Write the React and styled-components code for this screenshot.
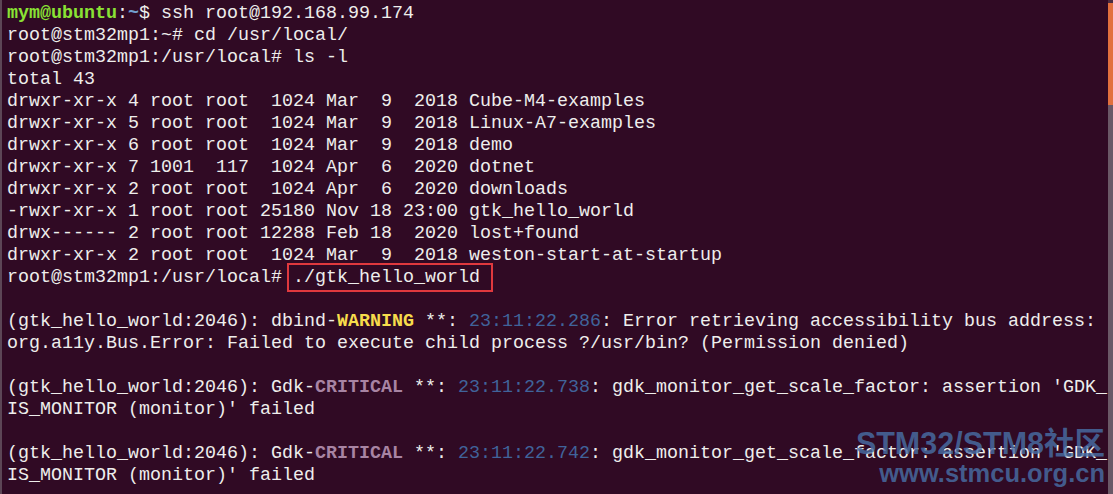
import React from "react";
import styled, { createGlobalStyle } from "styled-components";

const Global = createGlobalStyle`
  html, body {
    margin: 0;
    padding: 0;
    background: #300a24;
  }
`;

const files = [
  "drwxr-xr-x 4 root root  1024 Mar  9  2018 Cube-M4-examples",
  "drwxr-xr-x 5 root root  1024 Mar  9  2018 Linux-A7-examples",
  "drwxr-xr-x 6 root root  1024 Mar  9  2018 demo",
  "drwxr-xr-x 7 1001  117  1024 Apr  6  2020 dotnet",
  "drwxr-xr-x 2 root root  1024 Apr  6  2020 downloads",
  "-rwxr-xr-x 1 root root 25180 Nov 18 23:00 gtk_hello_world",
  "drwx------ 2 root root 12288 Feb 18  2020 lost+found",
  "drwxr-xr-x 2 root root  1024 Mar  9  2018 weston-start-at-startup",
];

const App = () => {
  return (
    <>
      <Global />
      <Screen>
        <Edge />
        <Terminal>
          <Line>
            <Span $c="#8ae234" $bold>mym@ubuntu</Span>:<Span $c="#729fcf" $bold>~</Span>$ ssh root@192.168.99.174
          </Line>
          <Line>root@stm32mp1:~# cd /usr/local/</Line>
          <Line>root@stm32mp1:/usr/local# ls -l</Line>
          <Line>total 43</Line>
          {files.map((f, i) => (
            <Line key={i}>{f}</Line>
          ))}
          <Line>
            root@stm32mp1:/usr/local# <Boxed>./gtk_hello_world</Boxed>
          </Line>
          <Line> </Line>
          <Line>
            (gtk_hello_world:2046): dbind-<Span $c="#f7dc4c" $bold>WARNING</Span> **: <Span $c="#40639a">23:11:22.286</Span>: Error retrieving accessibility bus address:
          </Line>
          <Line>org.a11y.Bus.Error: Failed to execute child process ?/usr/bin? (Permission denied)</Line>
          <Line> </Line>
          <Line>
            (gtk_hello_world:2046): Gdk-<Span $c="#a884a3" $bold>CRITICAL</Span> **: <Span $c="#40639a">23:11:22.738</Span>: gdk_monitor_get_scale_factor: assertion 'GDK_
          </Line>
          <Line>IS_MONITOR (monitor)' failed</Line>
          <Line> </Line>
          <Line>
            (gtk_hello_world:2046): Gdk-<Span $c="#a884a3" $bold>CRITICAL</Span> **: <Span $c="#40639a">23:11:22.742</Span>: gdk_monitor_get_scale_factor: assertion 'GDK_
          </Line>
          <Line>IS_MONITOR (monitor)' failed</Line>
        </Terminal>
        <Scrollbar>
          <Gap />
          <Thumb />
          <Track />
        </Scrollbar>
        <Watermark>
          <Mark $size={30.5}>STM32/STM8社区</Mark>
          <Mark $size={25.5}>www.stmcu.org.cn</Mark>
        </Watermark>
      </Screen>
    </>
  );
};

const Screen = styled.div`
  position: relative;
  display: flex;
  width: 1113px;
  height: 494px;
  overflow: hidden;
  background: #300a24;
`;

const Edge = styled.div`
  width: 2px;
  flex: none;
  background: #5c4656;
`;

const Terminal = styled.div`
  flex: 1;
  padding: 3px 0 0 5px;
  font-family: "Liberation Mono", "Courier New", monospace;
  font-size: 18.33px;
  color: #eeeeec;
`;

const Line = styled.div`
  height: 22px;
  line-height: 22px;
  white-space: pre;
`;

const Span = styled.span`
  color: ${(p) => p.$c};
  font-weight: ${(p) => (p.$bold ? "bold" : "normal")};
`;

const Boxed = styled.span`
  margin-left: -6px;
  padding: 2px 11px 2px 4px;
  border: 2px solid #e0393e;
`;

const Scrollbar = styled.div`
  width: 5px;
  flex: none;
  display: flex;
  flex-direction: column;
`;

const Gap = styled.div`
  height: 3px;
  background: #4a2b40;
`;

const Thumb = styled.div`
  height: 102px;
  background: #e2703e;
`;

const Track = styled.div`
  flex: 1;
  background: #6a5866;
`;

const Watermark = styled.div`
  position: absolute;
  right: 8px;
  bottom: 6px;
  display: flex;
  flex-direction: column;
  align-items: flex-end;
  pointer-events: none;
`;

const Mark = styled.div`
  font-family: "Liberation Sans", "Noto Sans CJK SC", sans-serif;
  font-weight: bold;
  font-size: ${(p) => p.$size}px;
  line-height: 30px;
  color: rgba(72, 110, 164, 0.82);
`;

export default App;
